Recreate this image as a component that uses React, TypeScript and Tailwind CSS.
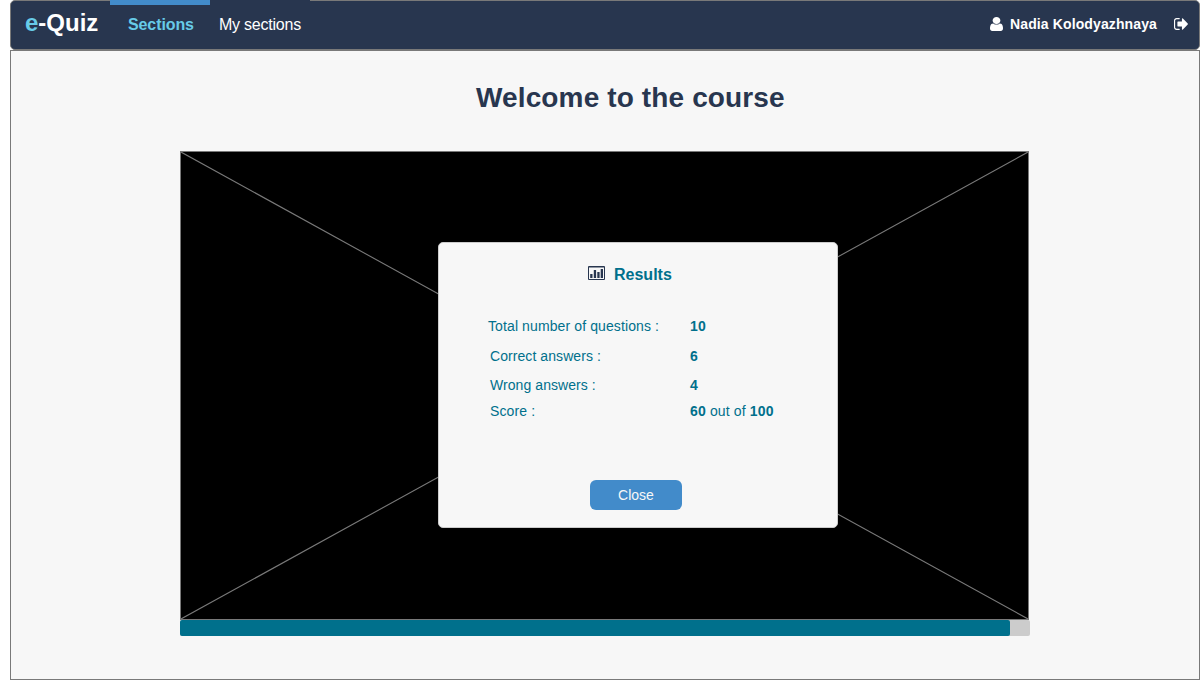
const rows = [
  { label: "Total number of questions :", value: <b>10</b>, row: "h-[30px] -ml-0.5 tracking-[0.11px]", gap: "w-[202px]" },
  { label: "Correct answers :", value: <b>6</b>, row: "h-[30px] tracking-[0.07px]", gap: "w-[200px]" },
  { label: "Wrong answers :", value: <b>4</b>, row: "h-[28px] tracking-[0.07px]", gap: "w-[200px]" },
  {
    label: "Score :",
    value: (
      <>
        <b>60</b> out of <b>100</b>
      </>
    ),
    row: "h-[24px] tracking-[0.14px]",
    gap: "w-[200px]",
  },
];

function UserIcon() {
  return (
    <svg className="h-[14px] w-[13px]" viewBox="256 128 1280 1536" preserveAspectRatio="none" fill="currentColor">
      <path d="M1536 1399q0 109-62.5 187t-150.5 78h-854q-88 0-150.5-78t-62.5-187q0-85 8.500-160.500t31.500-152 58.500-131 94-89 134.500-34.500q131 128 313 128t313-128q76 0 134.500 34.500t94 89 58.500 131 31.500 152 8.500 160.500zM1280 512q0 159-112.500 271.500t-271.500 112.500-271.500-112.500-112.500-271.500 112.500-271.500 271.500-112.500 271.500 112.500 112.500 271.500z" />
    </svg>
  );
}

function SignOutIcon() {
  return (
    <svg className="h-[12px] w-[14px]" viewBox="64 256 1580 1280" preserveAspectRatio="none" fill="currentColor">
      <path d="M704 1440q0 4 1 20t.5 26.500-3 23.500-10 19.500-20.500 6.500h-320q-119 0-203.500-84.500t-84.500-203.500v-704q0-119 84.500-203.500t203.500-84.500h320q13 0 22.500 9.500t9.500 22.500q0 4 1 20t.5 26.500-3 23.500-10 19.500-20.500 6.500h-320q-66 0-113 47t-47 113v704q0 66 47 113t113 47h312l11.500 1 11.500 3 8 5.500 7 9 2 13.500zm928-544q0 26-19 45l-544 544q-19 19-45 19t-45-19-19-45v-288h-448q-26 0-45-19t-19-45v-384q0-26 19-45t45-19h448v-288q0-26 19-45t45-19 45 19l544 544q19 19 19 45z" />
    </svg>
  );
}

function ChartIcon() {
  return (
    <svg className="mb-[4px] h-[14px] w-[17px]" viewBox="0 0 17 14" fill="#28364f">
      <path fillRule="evenodd" d="M1 0h15q1 0 1 1v12q0 1-1 1H1q-1 0-1-1V1q0-1 1-1zM1 1.5V13h15V1.5z" />
      <path d="M2.200 8h2.300v4H2.200zM5.800 4h2.300v8H5.800zM9.300 6h2.300v6H9.300zM12.700 3h2.300v9h-2.300z" />
    </svg>
  );
}

function Header() {
  return (
    <header className="flex h-[50px] items-start rounded-[5px] border border-[#797979] bg-[#28364f] text-white">
      <div className="ml-[14px] mt-[7px] w-[85px] text-[24px] font-bold leading-[30px]">
        <span className="text-[#67cbe8]">e</span>-Quiz
      </div>
      <nav className="-mt-px flex text-[16px]">
        <a className="h-[49px] w-[100px] border-t-[5px] border-[#428bca] pl-[18px] pt-[8px] font-bold leading-[24px] tracking-[-0.1px] text-[#67cbe8]">
          Sections
        </a>
        <a className="h-[49px] w-[100px] border-t border-[#28364f] pl-[9px] pt-[12px] leading-[24px] tracking-[-0.23px]">
          My sections
        </a>
      </nav>
      <div className="ml-auto mr-[11px] flex h-[46px] items-center text-[14px] font-bold">
        <UserIcon />
        <span className="ml-[7px] w-[149px] whitespace-nowrap tracking-[0.12px]">Nadia Kolodyazhnaya</span>
        <span className="ml-[15px]">
          <SignOutIcon />
        </span>
      </div>
    </header>
  );
}

function Results() {
  return (
    <section className="absolute left-[257px] top-[90px] flex h-[286px] w-[400px] flex-col rounded-[5px] border border-[#cccccc] bg-[#f7f7f7] text-[#00708c]">
      <h2 className="ml-[149px] mt-[20px] flex h-[24px] items-center text-[16px] font-bold">
        <ChartIcon />
        <span className="ml-[9px]">Results</span>
      </h2>
      <div className="ml-[51px] mt-[24px] text-[14px]">
        {rows.map((r) => (
          <div key={r.label} className={`flex items-center whitespace-nowrap ${r.row}`}>
            <span className={r.gap}>{r.label}</span>
            <span>{r.value}</span>
          </div>
        ))}
      </div>
      <button className="ml-[151px] mt-[57px] h-[30px] w-[92px] rounded-[6px] bg-[#428bca] text-[14px] text-[#f7f7f7]">
        Close
      </button>
    </section>
  );
}

export default function App() {
  return (
    <div className="flex h-[680px] w-[1200px] flex-col overflow-hidden bg-white pl-[10px] font-['Liberation_Sans',Arial,sans-serif]">
      <Header />
      <main className="h-[630px] border border-[#797979] bg-[#f7f7f7]">
        <h1 className="mt-[27px] pl-[465px] text-[28px] font-bold leading-[40px] tracking-[0.13px] text-[#28364f]">
          Welcome to the course
        </h1>
        <div className="ml-[169px] mt-[33px] w-[850px]">
          <div className="relative h-[469px] w-[849px] border border-[#797979] bg-black">
            <svg className="h-[467px] w-[847px]" viewBox="0 0 847 467" fill="none" stroke="#797979" strokeWidth="1.1">
              <path d="M0 0L847 467M0 467L847 0" />
            </svg>
            <Results />
          </div>
          <div className="h-[16px] rounded-[2px] bg-[#cccccc]">
            <div className="h-full w-[830px] rounded-[2px] bg-[#00708c]" />
          </div>
        </div>
      </main>
    </div>
  );
}
